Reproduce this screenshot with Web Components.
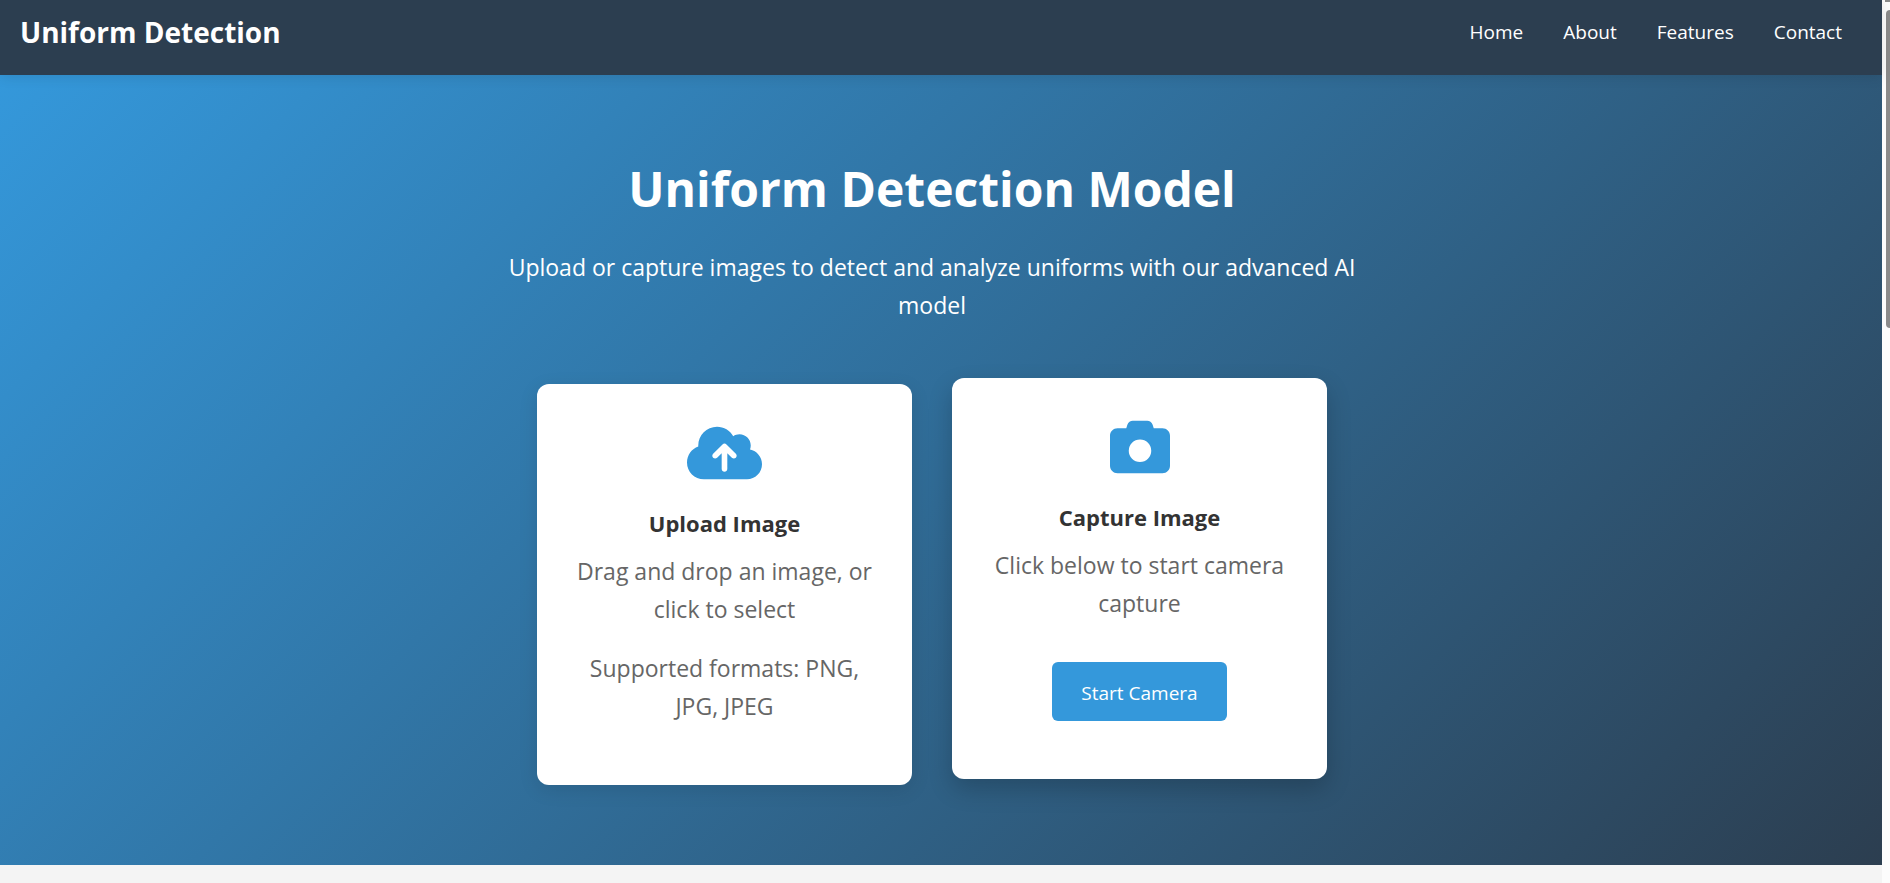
<!DOCTYPE html>
<html lang="en">
<head>
<meta charset="utf-8">
<meta name="viewport" content="width=device-width, initial-scale=1">
<title>Uniform Detection</title>
<style>
  body {
    margin: 0;
    font-family: "Open Sans", "Noto Sans", sans-serif;
    background: #f4f4f4;
    color: #333;
  }
</style>
</head>
<body>
<page-shell>
  <site-header>
    <span slot="brand">Uniform Detection</span>
    <nav-link href="#home">Home</nav-link>
    <nav-link href="#about">About</nav-link>
    <nav-link href="#features">Features</nav-link>
    <nav-link href="#contact">Contact</nav-link>
  </site-header>
  <hero-section>
    <span slot="title">Uniform Detection Model</span>
    <span slot="lead">Upload or capture images to detect and analyze uniforms with our advanced AI model</span>
    <action-card icon="cloud">
      <span slot="title">Upload Image</span>
      <card-text>Drag and drop an image, or click to select</card-text>
      <card-text>Supported formats: PNG, JPG, JPEG</card-text>
    </action-card>
    <action-card icon="camera" raised>
      <span slot="title">Capture Image</span>
      <card-text>Click below to start camera capture</card-text>
      <primary-button>Start Camera</primary-button>
    </action-card>
  </hero-section>
  <scroll-rail slot="rail"></scroll-rail>
</page-shell>

<script>
  const define = (name, html) => {
    customElements.define(name, class extends HTMLElement {
      constructor() {
        super();
        this.attachShadow({ mode: 'open' }).innerHTML =
          typeof html === 'function' ? html(this) : html;
      }
    });
  };

  const icons = {
    cloud: `<svg viewBox="0 0 640 512" width="75" height="60" aria-hidden="true"><path d="M144 480C64.5 480 0 415.5 0 336c0-62.8 40.2-116.2 96.2-135.9c-.1-2.7-.2-5.4-.2-8.1c0-88.4 71.6-160 160-160c59.3 0 111 32.2 138.7 80.2C409.9 102 428.3 96 448 96c53 0 96 43 96 96c0 12.2-2.3 23.8-6.4 34.6C596 238.4 640 290.1 640 352c0 70.7-57.3 128-128 128H144zm79-217c-9.4 9.4-9.4 24.6 0 33.9s24.6 9.4 33.9 0l39-39V392c0 13.3 10.7 24 24 24s24-10.7 24-24V257.9l39 39c9.4 9.4 24.6 9.4 33.9 0s9.4-24.6 0-33.9l-80-80c-9.4-9.4-24.6-9.4-33.9 0l-80 80z"/></svg>`,
    camera: `<svg viewBox="0 0 512 512" width="60" height="60" aria-hidden="true"><path d="M149.1 64.8L138.7 96H64C28.7 96 0 124.7 0 160V416c0 35.3 28.7 64 64 64H448c35.3 0 64-28.7 64-64V160c0-35.3-28.7-64-64-64H373.3L362.9 64.8C356.4 45.2 338.1 32 317.4 32H194.6c-20.7 0-39 13.2-45.5 32.8zM256 192a96 96 0 1 1 0 192 96 96 0 1 1 0-192z"/></svg>`
  };

  define('page-shell', `
    <style>
      :host { display: flex; min-height: 100vh; }
      .page { flex: 1; min-width: 0; }
    </style>
    <div class="page"><slot></slot></div>
    <slot name="rail"></slot>`);

  define('site-header', `
    <style>
      :host { display: block; position: relative; z-index: 1; background: #2c3e50; color: #fff; box-shadow: 0 2px 12px rgba(0, 0, 0, .1); }
      header { display: flex; justify-content: space-between; align-items: center; padding: 8px 40px 19px 20px; }
      .brand { font-size: 28px; line-height: 48px; font-weight: 700; }
      nav { display: flex; gap: 40px; }
    </style>
    <header>
      <div class="brand"><slot name="brand"></slot></div>
      <nav><slot></slot></nav>
    </header>`);

  define('nav-link', el => `
    <style>
      :host { display: block; font-size: 19px; line-height: 32px; }
      a { color: inherit; text-decoration: none; }
    </style>
    <a href="${el.getAttribute('href')}"><slot></slot></a>`);

  define('hero-section', `
    <style>
      :host { display: block; background: linear-gradient(135deg, #3498db, #2c3e50); color: #fff; text-align: center; }
      section { padding: 80px 38px 80px 20px; }
      h1 { margin: 0 0 25px; font-size: 48px; line-height: 68px; font-weight: 700; }
      p { max-width: 860px; margin: 0 auto 60px; font-size: 23px; line-height: 38px; }
      .cards { display: flex; flex-wrap: wrap; justify-content: center; gap: 40px; }
    </style>
    <section>
      <h1><slot name="title"></slot></h1>
      <p><slot name="lead"></slot></p>
      <div class="cards"><slot></slot></div>
    </section>`);

  define('action-card', el => `
    <style>
      :host { display: block; box-sizing: border-box; width: 375px; padding: 39px 36px 58px; border-radius: 12px; background: #fff; color: #333; box-shadow: 0 5px 19px rgba(0, 0, 0, .1); }
      :host([raised]) { transform: translateY(-6px); box-shadow: 0 10px 25px rgba(0, 0, 0, .2); }
      svg { display: block; margin: 0 auto 21px; fill: #3498db; }
      h3 { margin: 0 0 10px; font-size: 22px; line-height: 38px; font-weight: 700; }
      .body { display: flex; flex-direction: column; align-items: center; gap: 21px; }
    </style>
    ${icons[el.getAttribute('icon')]}
    <h3><slot name="title"></slot></h3>
    <div class="body"><slot></slot></div>`);

  define('card-text', `
    <style>
      :host { display: block; }
      p { margin: 0; color: #666; font-size: 23px; line-height: 38px; }
    </style>
    <p><slot></slot></p>`);

  define('primary-button', `
    <style>
      :host { display: block; margin-top: 19px; }
      button { display: block; padding: 15px 29px 12px; border: 0; border-radius: 6px; background: #3498db; color: #fff; font-family: inherit; font-size: 19px; line-height: 32px; cursor: pointer; }
    </style>
    <button type="button"><slot></slot></button>`);

  define('scroll-rail', `
    <style>
      :host { display: flex; flex-direction: column; align-items: flex-end; gap: 8px; width: 8px; background: #fcfcfc; }
      .cap { width: 5px; height: 2px; background: #8b8b8b; }
      .thumb { width: 4px; height: 318px; border-radius: 4px 0 0 4px; background: #8b8b8b; }
    </style>
    <div class="cap"></div>
    <div class="thumb"></div>`);
</script>
</body>
</html>
